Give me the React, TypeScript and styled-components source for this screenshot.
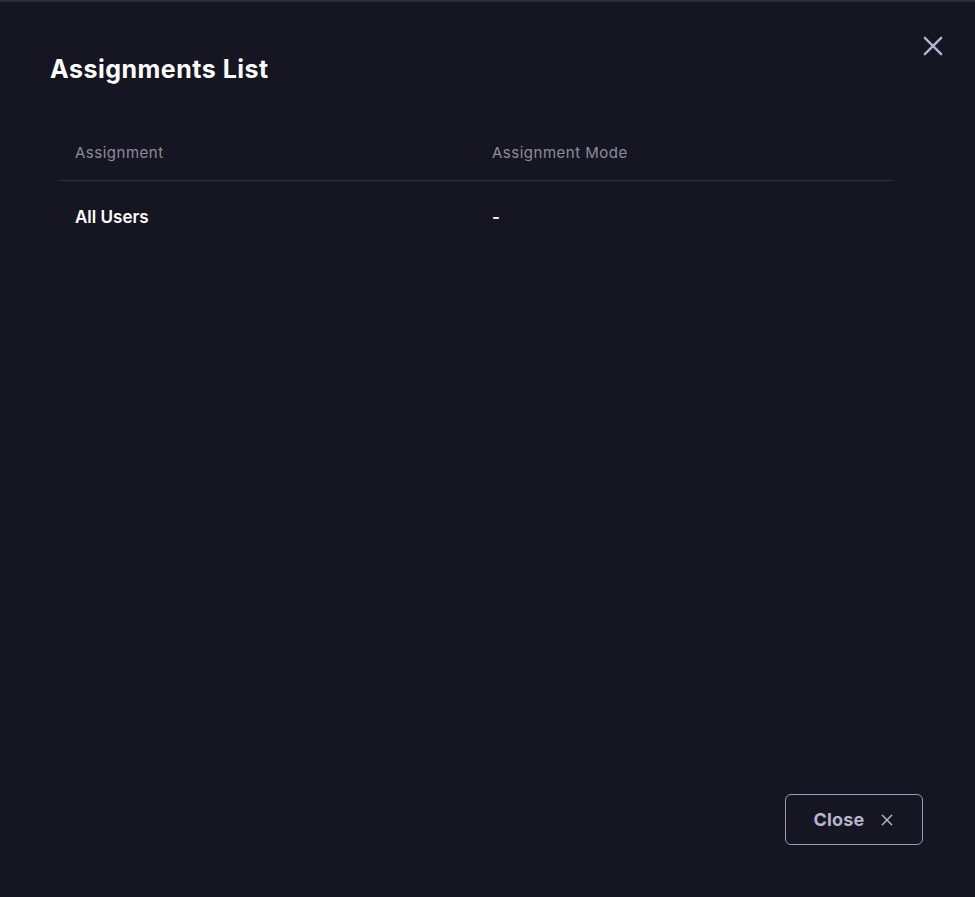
import styled, { createGlobalStyle } from "styled-components";

const GlobalStyle = createGlobalStyle`
  html, body {
    margin: 0;
    padding: 0;
    background: #161622;
  }
  body {
    font-family: "Inter", "Noto Sans", sans-serif;
  }
`;

const Modal = styled.div`
  position: relative;
  box-sizing: border-box;
  width: 975px;
  height: 897px;
  background: #161622;
  border-top: 2px solid #2b2b3a;
  border-bottom-right-radius: 8px;
  display: flex;
  flex-direction: column;
  padding: 52px 52px 52px 50px;
`;

const Title = styled.h2`
  margin: 0;
  font-size: 25px;
  line-height: 30px;
  font-weight: 700;
  color: #ffffff;
  letter-spacing: 0.5px;
`;

const CloseIcon = styled.button`
  position: absolute;
  top: 30px;
  right: 28px;
  width: 28px;
  height: 28px;
  padding: 0;
  border: none;
  background: transparent;
  color: #b4b4d4;
  cursor: pointer;
  display: flex;
  align-items: center;
  justify-content: center;
`;

const Table = styled.div`
  margin: 40px 30px 0 9px;
  display: grid;
  grid-template-columns: 1fr 1fr;
`;

const HeadCell = styled.div`
  padding: 0 16px;
  height: 56px;
  display: flex;
  align-items: center;
  font-size: 15px;
  letter-spacing: 0.5px;
  color: #8c8c9c;
  border-bottom: 1px solid #2e2e3e;
`;

const Cell = styled.div`
  padding: 0 16px;
  height: 72px;
  display: flex;
  align-items: center;
  font-size: 17px;
  font-weight: 600;
  color: #ffffff;
`;

const Footer = styled.div`
  margin-top: auto;
  display: flex;
  justify-content: flex-end;
`;

const Button = styled.button`
  box-sizing: border-box;
  width: 138px;
  height: 51px;
  border: 1.5px solid #9c9cb4;
  border-radius: 6px;
  background: transparent;
  color: #b4b4cc;
  font-family: inherit;
  font-size: 18px;
  font-weight: 700;
  letter-spacing: 0.2px;
  display: flex;
  align-items: center;
  justify-content: center;
  gap: 14px;
  cursor: pointer;
`;

const X = ({ size, stroke }: { size: number; stroke: number }) => (
  <svg width={size} height={size} viewBox="0 0 24 24" fill="none" stroke="currentColor" strokeWidth={stroke} strokeLinecap="round">
    <path d="M5 5 L19 19 M19 5 L5 19" />
  </svg>
);

export default function App() {
  return (
    <>
      <GlobalStyle />
      <Modal>
        <Title>Assignments List</Title>
        <CloseIcon aria-label="close">
          <X size={28} stroke={2} />
        </CloseIcon>
        <Table>
          <HeadCell>Assignment</HeadCell>
          <HeadCell>Assignment Mode</HeadCell>
          <Cell>All Users</Cell>
          <Cell>-</Cell>
        </Table>
        <Footer>
          <Button>
            Close
            <X size={16} stroke={2.2} />
          </Button>
        </Footer>
      </Modal>
    </>
  );
}
